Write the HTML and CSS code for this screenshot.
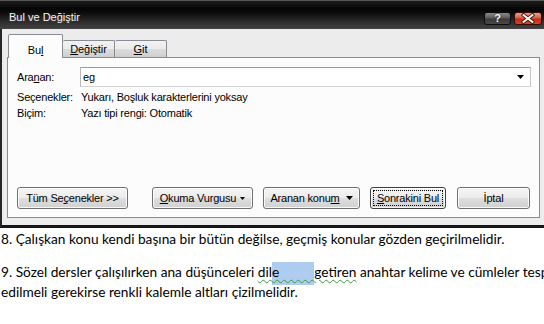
FILE: index.html
```html
<!DOCTYPE html>
<html lang="tr">
<head>
<meta charset="utf-8">
<title>Bul ve Değiştir</title>
<link rel="stylesheet" href="styles.css">
</head>
<body>
<div class="window">
  <div class="titlebar">
    <span class="title">Bul ve Değiştir</span>
    <div class="caption-btns">
      <span class="cbtn help">?</span>
      <span class="cbtn close"><svg width="26" height="11" viewBox="0 0 26 11"><path d="M8.5 2 L17.5 9 M17.5 2 L8.5 9" stroke="#4a1208" stroke-width="3.6" stroke-linecap="square" fill="none"/><path d="M8.5 2 L17.5 9 M17.5 2 L8.5 9" stroke="#ffffff" stroke-width="1.9" stroke-linecap="square" fill="none"/></svg></span>
    </div>
  </div>
  <div class="client">
    <div class="tabs">
      <span class="tab active">Bu<u>l</u></span>
      <span class="tab"><u>D</u>eğiştir</span>
      <span class="tab"><u>G</u>it</span>
    </div>
    <div class="panel">
      <div class="find-row">
        <span class="find-label">Ara<u>n</u>an:</span>
        <div class="combo">
          <span class="combo-text">eg</span>
          <svg class="combo-arrow" width="7" height="4" viewBox="0 0 7 4"><polygon points="0,0 7,0 3.5,4" fill="#000"/></svg>
        </div>
      </div>
      <div class="info-row first"><span class="info-label">Seçenekler:</span><span>Yukarı, Boşluk karakterlerini yoksay</span></div>
      <div class="info-row"><span class="info-label">Biçim:</span><span>Yazı tipi rengi: Otomatik</span></div>
      <div class="buttons">
        <span class="btn btn-all"><span>Tüm Se<u>ç</u>enekler &gt;&gt;</span></span>
        <span class="btn btn-read"><span><u>O</u>kuma Vurgusu</span><svg class="small-arrow" width="5" height="3" viewBox="0 0 5 3"><polygon points="0,0 5,0 2.5,3" fill="#000"/></svg></span>
        <span class="btn btn-loc"><span>Aranan konu<u>m</u></span><svg class="big-arrow" width="7" height="4" viewBox="0 0 7 4"><polygon points="0,0 7,0 3.5,4" fill="#000"/></svg></span>
        <span class="btn btn-next"><span class="focus-rect"><u>S</u>onrakini Bul</span></span>
        <span class="btn btn-cancel"><span>İptal</span></span>
      </div>
    </div>
  </div>
</div>
<div class="doc">
  <p class="para">8. Çalışkan konu kendi başına bir bütün değilse, geçmiş konular gözden geçirilmelidir.</p>
  <p class="para spaced">9. Sözel dersler çalışılırken ana düşünceleri <span class="grammar">dil<span class="hl">e          </span>getiren</span> anahtar kelime ve cümleler tespit</p>
  <p class="para">edilmeli gerekirse renkli kalemle altları çizilmelidir.</p>
</div>
</body>
</html>
```

FILE: styles.css
```css
html, body {
  margin: 0;
  padding: 0;
}

body {
  width: 544px;
  height: 324px;
  overflow: hidden;
  background: #ffffff;
  font-family: "Liberation Sans", Arial, sans-serif;
}

.window {
  background: #ececec;
}

.titlebar {
  height: 29px;
  box-sizing: border-box;
  display: flex;
  justify-content: space-between;
  align-items: flex-start;
  padding: 0 2px 0 9px;
  background: linear-gradient(to bottom, #8c8c8c 0px, #1c1c1c 1px, #050505 9px, #0c0c0c 13px, #2a2a2a 21px, #444444 29px);
}

.title {
  color: #f4f4f4;
  font-size: 11px;
  line-height: 14px;
  padding-top: 10px;
  text-shadow: 0 0 4px rgba(255, 255, 255, 0.15);
}

.caption-btns {
  display: flex;
  gap: 3px;
  margin-top: 12px;
}

.cbtn {
  height: 13px;
  box-sizing: border-box;
  border: 1px solid #0c0c0c;
  border-radius: 3px;
  display: flex;
  align-items: center;
  justify-content: center;
}

.help {
  width: 27px;
  background: linear-gradient(to bottom, #8a8a8a 0%, #5c5c5c 45%, #3a3a3a 55%, #4a4a4a 100%);
  color: #ffffff;
  font-size: 11px;
  font-weight: bold;
  line-height: 11px;
  text-shadow: 0 0 2px #000;
}

.close {
  width: 28px;
  border-color: #3a0c06;
  background: linear-gradient(to bottom, #eaa090 0%, #d0604a 45%, #c02a14 55%, #d04830 100%);
}

.close svg {
  display: block;
}

.client {
  height: 199px;
  box-sizing: border-box;
  border-left: 2px solid #262626;
  border-bottom: 3px solid #161616;
  padding: 5px 4px 0 5px;
}

.tabs {
  display: flex;
  align-items: flex-end;
  height: 23px;
  padding-left: 1px;
  font-size: 11px;
  letter-spacing: -0.1px;
  position: relative;
  z-index: 1;
}

.tab {
  box-sizing: border-box;
  width: 52px;
  height: 17px;
  border: 1px solid #898c95;
  border-bottom: none;
  border-left: none;
  border-radius: 2px 2px 0 0;
  background: linear-gradient(to bottom, #f2f2f2 0%, #ebebeb 50%, #dcdcdc 51%, #cfcfcf 100%);
  color: #000;
  text-align: center;
  line-height: 16px;
}

.tab.active {
  width: 55px;
  height: 24px;
  margin-bottom: -1px;
  border-left: 1px solid #898c95;
  background: #fcfcfc;
  line-height: 14px;
  padding-top: 8px;
}

.panel {
  height: 161px;
  box-sizing: border-box;
  border: 1px solid #898c95;
  background: #fcfcfc;
  padding: 9px 8px 8px 9px;
  display: flex;
  flex-direction: column;
  font-size: 11px;
  letter-spacing: -0.2px;
  color: #000;
}

.find-row {
  display: flex;
  align-items: center;
  height: 20px;
}

.find-label {
  width: 63px;
  flex: none;
}

.combo {
  flex: 1;
  height: 20px;
  box-sizing: border-box;
  border: 1px solid;
  border-color: #9a9a9a #c4c4c4 #d4d4d4 #b8b8b8;
  background: #ffffff;
  display: flex;
  align-items: center;
  justify-content: space-between;
  padding: 0 6px 0 2px;
}

.combo-arrow {
  display: block;
}

.info-row {
  display: flex;
  line-height: 16px;
}

.info-row.first {
  margin-top: 2px;
}

.info-label {
  width: 64px;
  flex: none;
}

.buttons {
  margin-top: auto;
  display: flex;
  gap: 10px;
}

.btn {
  height: 22px;
  box-sizing: border-box;
  border: 1px solid #707070;
  border-radius: 3px;
  background: linear-gradient(to bottom, #f4f4f4 0%, #ececec 48%, #dedede 52%, #d0d0d0 100%);
  box-shadow: inset 0 0 0 1px rgba(255, 255, 255, 0.85);
  display: flex;
  align-items: center;
  justify-content: center;
  gap: 4px;
  white-space: nowrap;
}

.btn-all {
  width: 111px;
  margin-right: 14px;
}

.btn-read {
  width: 101px;
}

.btn-loc {
  width: 97px;
  gap: 6px;
}

.btn-next {
  width: 76px;
  border-color: #3e3e3e;
}

.btn-cancel {
  width: 73px;
  margin-left: 1px;
}

.focus-rect {
  border: 1px dotted #000;
  padding: 1px 3px;
  line-height: 12px;
}

.small-arrow,
.big-arrow {
  display: block;
}

.doc {
  padding: 1px 0 0 1px;
  font-family: Lato, "Liberation Sans", sans-serif;
  font-size: 13.7px;
  line-height: 20px;
  color: #000;
}

.para {
  margin: 0;
  white-space: nowrap;
}

.para.spaced {
  margin-top: 13px;
}

.grammar {
  text-decoration: underline wavy #3f9a3f;
  text-decoration-thickness: 1px;
  text-underline-offset: 2px;
}

.hl {
  white-space: pre;
  background: #aecbf0;
  padding: 1px 0 5px 0;
}
```
